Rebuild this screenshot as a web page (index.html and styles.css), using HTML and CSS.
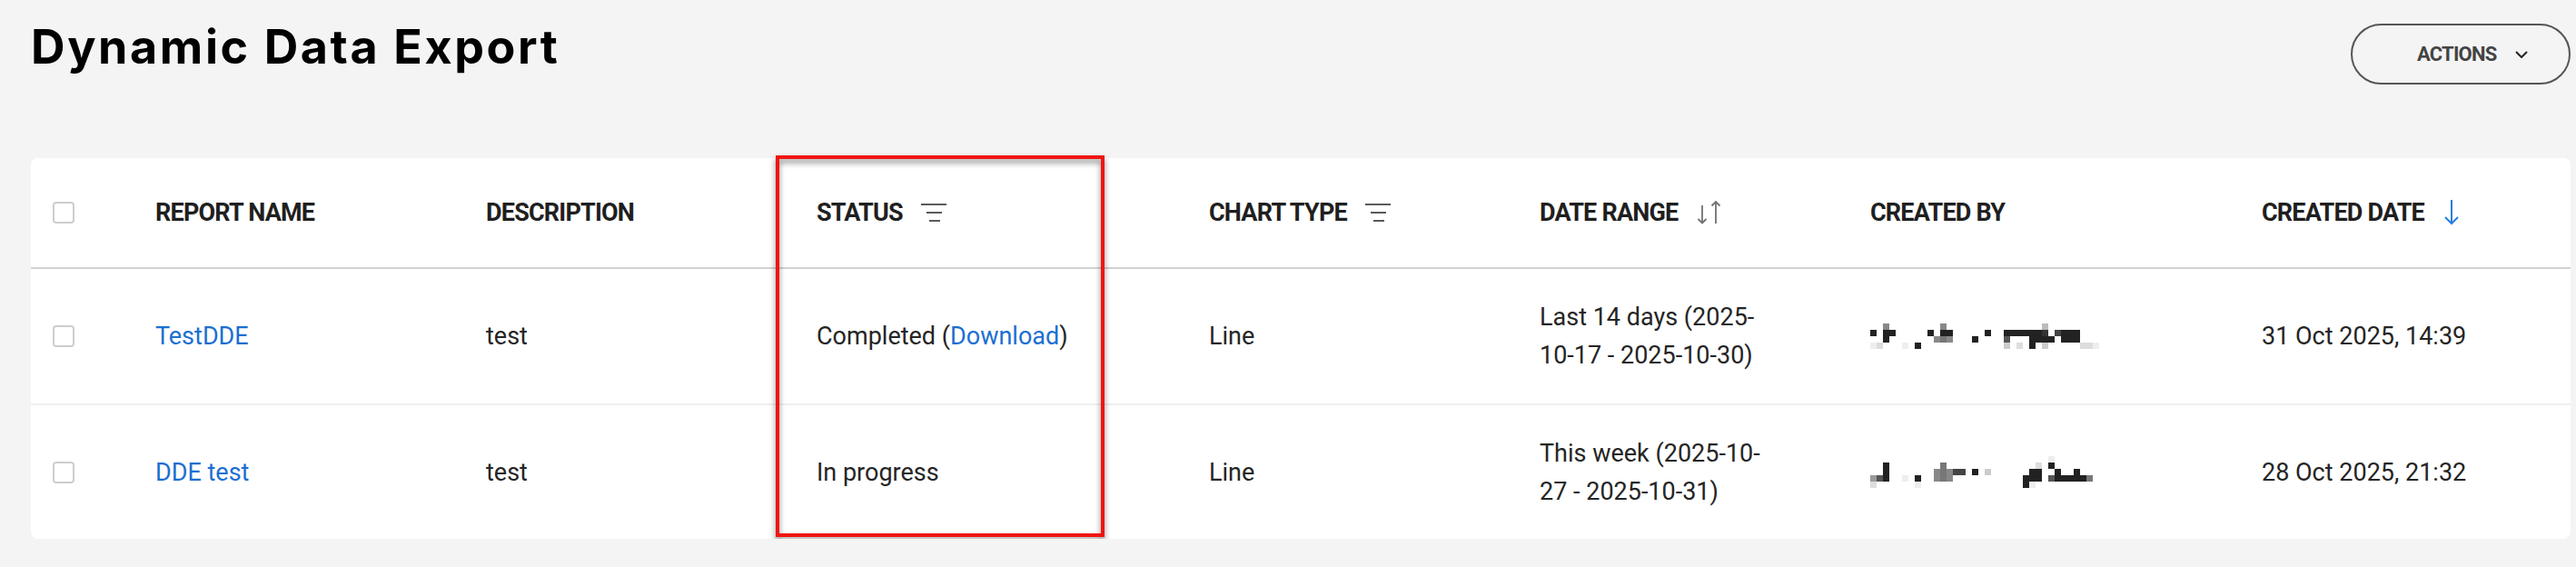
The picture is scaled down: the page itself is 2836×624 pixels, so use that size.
FILE: index.html
```html
<!DOCTYPE html>
<html lang="en">
<head>
<meta charset="utf-8">
<title>Dynamic Data Export</title>
<link rel="stylesheet" href="styles.css">
</head>
<body>
<div class="page">
  <header class="page-head">
    <h1 class="title">Dynamic Data Export</h1>
    <button class="actions" type="button">
      <span>ACTIONS</span>
      <svg class="chev" width="14" height="8" viewBox="0 0 14 8"><polyline points="1,1 7,7 13,1" fill="none" stroke="#222" stroke-width="2"/></svg>
    </button>
  </header>

  <div class="card">
    <div class="row head">
      <div class="cell"><span class="cb"></span></div>
      <div class="cell th">REPORT NAME</div>
      <div class="cell th">DESCRIPTION</div>
      <div class="cell th">STATUS
        <svg class="ico" width="28" height="20" viewBox="0 0 28 20"><g stroke="#5a5a5a" stroke-width="2"><line x1="0" y1="1" x2="28" y2="1"/><line x1="6" y1="10" x2="23" y2="10"/><line x1="9" y1="19" x2="21" y2="19"/></g></svg>
      </div>
      <div class="cell th">CHART TYPE
        <svg class="ico" width="28" height="20" viewBox="0 0 28 20"><g stroke="#5a5a5a" stroke-width="2"><line x1="0" y1="1" x2="28" y2="1"/><line x1="6" y1="10" x2="23" y2="10"/><line x1="9" y1="19" x2="21" y2="19"/></g></svg>
      </div>
      <div class="cell th">DATE RANGE
        <svg class="ico" width="30" height="26" viewBox="0 0 30 26"><g fill="none" stroke="#707070" stroke-width="1.8"><line x1="6" y1="5" x2="6" y2="25"/><polyline points="1.5,20 6,24.5 10.5,20"/><line x1="21" y1="1" x2="21" y2="25"/><polyline points="16.5,5.5 21,1 25.5,5.5"/></g></svg>
      </div>
      <div class="cell th">CREATED BY</div>
      <div class="cell th">CREATED DATE
        <svg class="ico" width="20" height="28" viewBox="0 0 20 28"><g fill="none" stroke="#2a7de1" stroke-width="2"><line x1="10" y1="0" x2="10" y2="26"/><polyline points="3,19 10,26 17,19"/></g></svg>
      </div>
    </div>

    <div class="row">
      <div class="cell"><span class="cb"></span></div>
      <div class="cell"><a class="link" href="#">TestDDE</a></div>
      <div class="cell">test</div>
      <div class="cell">Completed (<a class="link" href="#">Download</a>)</div>
      <div class="cell">Line</div>
      <div class="cell">Last 14 days (2025-<br>10-17 - 2025-10-30)</div>
      <div class="cell">
        <svg class="redact" width="260" height="28" viewBox="0 0 260 28" shape-rendering="crispEdges">
          <rect x="14" y="0" width="7" height="7" fill="#888"/>
          <rect x="77" y="0" width="7" height="7" fill="#888"/>
          <rect x="189" y="0" width="7" height="7" fill="#bbb"/>
          <rect x="0" y="7" width="7" height="7" fill="#222"/>
          <rect x="14" y="7" width="14" height="7" fill="#222"/>
          <rect x="63" y="7" width="7" height="7" fill="#222"/>
          <rect x="77" y="7" width="14" height="7" fill="#222"/>
          <rect x="126" y="7" width="7" height="7" fill="#222"/>
          <rect x="147" y="7" width="42" height="7" fill="#222"/>
          <rect x="189" y="7" width="7" height="7" fill="#333"/>
          <rect x="203" y="7" width="7" height="7" fill="#444"/>
          <rect x="210" y="7" width="21" height="7" fill="#222"/>
          <rect x="14" y="14" width="7" height="7" fill="#222"/>
          <rect x="70" y="14" width="7" height="7" fill="#888"/>
          <rect x="77" y="14" width="7" height="7" fill="#777"/>
          <rect x="84" y="14" width="7" height="7" fill="#888"/>
          <rect x="112" y="14" width="7" height="7" fill="#222"/>
          <rect x="147" y="14" width="7" height="7" fill="#555"/>
          <rect x="175" y="14" width="28" height="7" fill="#222"/>
          <rect x="210" y="14" width="21" height="7" fill="#222"/>
          <rect x="0" y="21" width="7" height="7" fill="#eee"/>
          <rect x="7" y="21" width="7" height="7" fill="#ddd"/>
          <rect x="35" y="21" width="7" height="7" fill="#eee"/>
          <rect x="49" y="21" width="7" height="7" fill="#222"/>
          <rect x="147" y="21" width="7" height="7" fill="#ccc"/>
          <rect x="161" y="21" width="7" height="7" fill="#ddd"/>
          <rect x="175" y="21" width="7" height="7" fill="#222"/>
          <rect x="189" y="21" width="7" height="7" fill="#ccc"/>
          <rect x="231" y="21" width="14" height="7" fill="#ddd"/>
          <rect x="245" y="21" width="7" height="7" fill="#eee"/>
        </svg>
      </div>
      <div class="cell">31 Oct 2025, 14:39</div>
    </div>

    <div class="row last">
      <div class="cell"><span class="cb"></span></div>
      <div class="cell"><a class="link" href="#">DDE test</a></div>
      <div class="cell">test</div>
      <div class="cell">In progress</div>
      <div class="cell">Line</div>
      <div class="cell">This week (2025-10-<br>27 - 2025-10-31)</div>
      <div class="cell">
        <svg class="redact" width="260" height="35" viewBox="0 0 260 35" shape-rendering="crispEdges">
          <rect x="196" y="0" width="7" height="7" fill="#eee"/>
          <rect x="14" y="7" width="7" height="7" fill="#222"/>
          <rect x="77" y="7" width="7" height="7" fill="#777"/>
          <rect x="182" y="7" width="7" height="7" fill="#ddd"/>
          <rect x="196" y="7" width="7" height="7" fill="#222"/>
          <rect x="14" y="14" width="7" height="7" fill="#222"/>
          <rect x="70" y="14" width="7" height="7" fill="#888"/>
          <rect x="77" y="14" width="7" height="7" fill="#777"/>
          <rect x="84" y="14" width="7" height="7" fill="#888"/>
          <rect x="91" y="14" width="14" height="7" fill="#444"/>
          <rect x="112" y="14" width="7" height="7" fill="#222"/>
          <rect x="126" y="14" width="7" height="7" fill="#ccc"/>
          <rect x="175" y="14" width="14" height="7" fill="#222"/>
          <rect x="203" y="14" width="7" height="7" fill="#222"/>
          <rect x="224" y="14" width="7" height="7" fill="#222"/>
          <rect x="0" y="21" width="7" height="7" fill="#999"/>
          <rect x="7" y="21" width="7" height="7" fill="#555"/>
          <rect x="14" y="21" width="7" height="7" fill="#222"/>
          <rect x="35" y="21" width="7" height="7" fill="#eee"/>
          <rect x="49" y="21" width="7" height="7" fill="#222"/>
          <rect x="70" y="21" width="7" height="7" fill="#888"/>
          <rect x="77" y="21" width="7" height="7" fill="#777"/>
          <rect x="84" y="21" width="7" height="7" fill="#888"/>
          <rect x="168" y="21" width="21" height="7" fill="#222"/>
          <rect x="196" y="21" width="7" height="7" fill="#555"/>
          <rect x="203" y="21" width="35" height="7" fill="#222"/>
          <rect x="238" y="21" width="7" height="7" fill="#777"/>
          <rect x="0" y="28" width="7" height="7" fill="#ddd"/>
          <rect x="49" y="28" width="7" height="7" fill="#eee"/>
          <rect x="168" y="28" width="7" height="7" fill="#222"/>
          <rect x="175" y="28" width="7" height="7" fill="#eee"/>
        </svg>
      </div>
      <div class="cell">28 Oct 2025, 21:32</div>
    </div>

    <div class="highlight"></div>
  </div>
</div>
</body>
</html>
```

FILE: styles.css
```css
* { box-sizing: border-box; }

html, body {
  margin: 0;
  padding: 0;
  background: #f4f4f4;
}

body {
  font-family: Roboto, "Noto Sans", "Liberation Sans", sans-serif;
  color: #222;
}

.page {
  padding: 0 6px 0 34px;
}

.page-head {
  height: 174px;
  display: flex;
  justify-content: space-between;
  align-items: flex-start;
}

.title {
  margin: 22px 0 0 0;
  font-family: Inter, "Noto Sans", sans-serif;
  font-weight: 700;
  font-size: 52px;
  line-height: 60px;
  letter-spacing: 2.6px;
  color: #000;
}

.actions {
  margin-top: 26px;
  width: 242px;
  height: 67px;
  border: 2px solid #555;
  border-radius: 34px;
  background: transparent;
  display: flex;
  align-items: center;
  gap: 21px;
  padding: 0 0 0 71px;
  font-family: Roboto, "Noto Sans", sans-serif;
  font-weight: 700;
  font-size: 22px;
  letter-spacing: -0.8px;
  color: #444;
  cursor: pointer;
}

.chev { display: block; }

.card {
  position: relative;
  background: #fff;
  border-radius: 8px;
}

.row {
  display: grid;
  grid-template-columns: 113px 364px 364px 432px 364px 364px 431px 1fr;
  align-items: center;
  height: 150px;
  border-bottom: 2px solid #efefef;
  font-size: 27px;
  line-height: 42px;
  color: #252525;
}

.row.head {
  height: 122px;
  border-bottom: 2px solid #d2d2d2;
}

.row.last {
  height: 147px;
  border-bottom: none;
}

.cell {
  padding-left: 24px;
  display: flex;
  align-items: center;
  flex-wrap: wrap;
}

.cell.th {
  flex-wrap: nowrap;
  gap: 20px;
  font-weight: 700;
  letter-spacing: -0.8px;
  color: #1f1f1f;
}

.ico { display: block; flex: none; }

.cb {
  display: block;
  width: 24px;
  height: 24px;
  border: 2px solid #cdcdcd;
  border-radius: 4px;
  background: #fff;
}

.link {
  color: #1b6fd1;
  text-decoration: none;
}

.redact { display: block; }

.highlight {
  position: absolute;
  left: 820px;
  top: -3px;
  width: 362px;
  height: 420px;
  border: 4px solid #f0150f;
  filter: drop-shadow(0 4px 3px rgba(0, 0, 0, 0.5));
  pointer-events: none;
}
```
